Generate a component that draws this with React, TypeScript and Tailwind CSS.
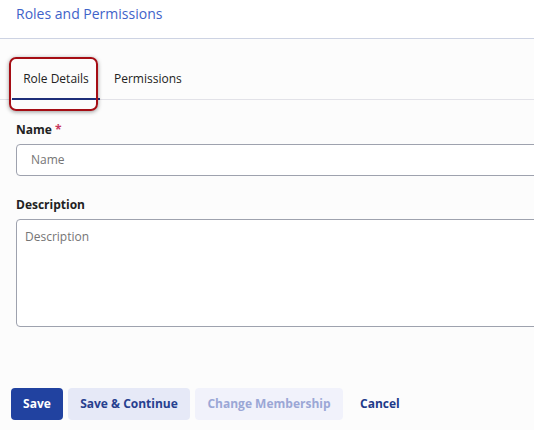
export default function App() {
  return (
    <div className="w-[534px] h-[430px] overflow-hidden bg-[#fcfcfc] font-['Open_Sans',sans-serif] text-[#222]">
      {/* ── Header ── */}
      <div className="h-[39px] bg-white border-b border-[#cdd3e3] px-4 pt-[4px]">
        <h1 className="text-[14px] leading-5 text-[#3f63c9]">Roles and Permissions</h1>
      </div>

      {/* ── Tabs ── */}
      <div className="relative h-[61px] border-b border-[#e2e2e8] flex items-end px-3 text-[12px]">
        <div className="h-[40px] w-[88px] flex items-center justify-center border-b-2 border-[#1d2d78] -mb-px">
          Role Details
        </div>
        <div className="h-[40px] pl-[14px] flex items-center">Permissions</div>
        {/* annotation highlight */}
        <div className="absolute left-[9px] top-[18px] w-[89px] h-[54px] border-[2.5px] border-[#a50d14] rounded-[7px] shadow-[0_1px_4px_rgba(0,0,0,0.4)] pointer-events-none" />
      </div>

      {/* ── Form ── */}
      <div className="pl-4 pt-[21px] text-[12px]">
        <label className="block font-bold leading-[18px]">
          Name <span className="text-[#c8385e]">*</span>
        </label>
        <div className="mt-[5px] w-[560px] h-8 bg-white border border-[#9ea2ae] rounded-[4px] pl-[14px] flex items-center text-[#757575]">
          Name
        </div>

        <label className="block mt-[20px] font-bold leading-[18px]">Description</label>
        <div className="mt-[5px] w-[560px] h-[108px] bg-white border border-[#9ea2ae] rounded-[4px] pl-2 pt-[8px] text-[#757575]">
          Description
        </div>
      </div>

      {/* ── Actions ── */}
      <div className="mt-[61px] pl-[11px] flex items-center gap-[5px] text-[12px] font-bold">
        <button className="h-8 w-[52px] rounded-[4px] bg-[#2142a0] text-white">Save</button>
        <button className="h-8 w-[122px] rounded-[4px] bg-[#e6e9f7] text-[#27408f]">Save &amp; Continue</button>
        <button className="h-8 w-[148px] rounded-[4px] bg-[#f1f2fb] text-[#9ba7d6]">Change Membership</button>
        <button className="h-8 pl-[12px] text-[#1e3a8a]">Cancel</button>
      </div>
    </div>
  );
}
